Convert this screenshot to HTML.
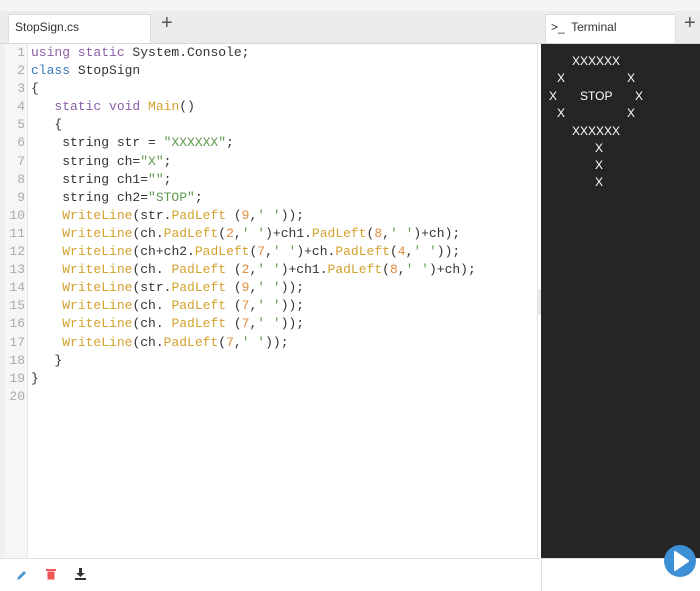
<!DOCTYPE html>
<html><head><style>
body{margin:0;width:700px;height:591px;background:#fff;position:relative;overflow:hidden;font-family:"Liberation Sans",sans-serif}
.a{position:absolute}
.code{font-family:"Liberation Mono",monospace;font-size:13px;line-height:18.1px;white-space:pre;color:#333}
.k{color:#8a5ea8}.b{color:#3a7ab8}.f{color:#d3a22c}.s{color:#5e9a4f}.n{color:#e08a3a}
.term{font-family:"Liberation Sans",sans-serif;font-size:12px;line-height:17.5px;color:#fff;white-space:pre}
</style></head><body>
<div class="a" style="left:0;top:0;width:700px;height:11px;background:#f5f5f5"></div>
<div class="a" style="left:0;top:11px;width:700px;height:32px;background:#ebebeb;border-bottom:1px solid #d8d8d8"></div>
<div class="a" style="left:8px;top:14px;width:143px;height:29px;background:#fff;border:1px solid #ddd;border-bottom:none;box-sizing:border-box"></div>
<div class="a" style="left:15px;top:20px;font-size:12px;color:#333">StopSign.cs</div>
<div class="a" style="left:161px;top:12px;font-size:20px;color:#555;font-weight:300">+</div>
<div class="a" style="left:545px;top:14px;width:131px;height:29px;background:#fff;border:1px solid #ddd;border-bottom:none;box-sizing:border-box"></div>
<div class="a" style="left:551px;top:20px;font-size:12px;color:#333">&gt;_&nbsp; Terminal</div>
<div class="a" style="left:684px;top:12px;font-size:20px;color:#555">+</div>
<div class="a" style="left:0;top:44px;width:5px;height:514px;background:#f0f0f0"></div>
<div class="a" style="left:5px;top:44px;width:22px;height:514px;background:#f6f6f6;border-right:1px solid #e4e4e4"></div>
<div class="a" style="left:537px;top:44px;width:1px;height:514px;background:#e4e4e4"></div>
<div class="a" style="left:538px;top:289px;width:4px;height:26px;background:#e8e8e8;border-radius:2px"></div>
<div class="a" style="left:541px;top:44px;width:159px;height:514px;background:#252525"></div>
<div class="a code" style="left:5px;top:44px;width:20px;text-align:right;color:#aaa">1
2
3
4
5
6
7
8
9
10
11
12
13
14
15
16
17
18
19
20</div>
<div class="a code" style="left:31px;top:44px"><span class="k">using static</span> System.Console;
<span class="b">class</span> StopSign
{
   <span class="k">static void</span> <span class="f">Main</span>()
   {
    string str = <span class="s">"XXXXXX"</span>;
    string ch=<span class="s">"X"</span>;
    string ch1=<span class="s">""</span>;
    string ch2=<span class="s">"STOP"</span>;
    <span class="f">WriteLine</span>(str.<span class="f">PadLeft</span> (<span class="n">9</span>,<span class="s">' '</span>));
    <span class="f">WriteLine</span>(ch.<span class="f">PadLeft</span>(<span class="n">2</span>,<span class="s">' '</span>)+ch1.<span class="f">PadLeft</span>(<span class="n">8</span>,<span class="s">' '</span>)+ch);
    <span class="f">WriteLine</span>(ch+ch2.<span class="f">PadLeft</span>(<span class="n">7</span>,<span class="s">' '</span>)+ch.<span class="f">PadLeft</span>(<span class="n">4</span>,<span class="s">' '</span>));
    <span class="f">WriteLine</span>(ch. <span class="f">PadLeft</span> (<span class="n">2</span>,<span class="s">' '</span>)+ch1.<span class="f">PadLeft</span>(<span class="n">8</span>,<span class="s">' '</span>)+ch);
    <span class="f">WriteLine</span>(str.<span class="f">PadLeft</span> (<span class="n">9</span>,<span class="s">' '</span>));
    <span class="f">WriteLine</span>(ch. <span class="f">PadLeft</span> (<span class="n">7</span>,<span class="s">' '</span>));
    <span class="f">WriteLine</span>(ch. <span class="f">PadLeft</span> (<span class="n">7</span>,<span class="s">' '</span>));
    <span class="f">WriteLine</span>(ch.<span class="f">PadLeft</span>(<span class="n">7</span>,<span class="s">' '</span>));
   }
}
</div>
<div class="a term" style="left:572px;top:53px">XXXXXX</div>
<div class="a term" style="left:557px;top:70px">X</div><div class="a term" style="left:627px;top:70px">X</div>
<div class="a term" style="left:549px;top:88px">X</div><div class="a term" style="left:580px;top:88px">STOP</div><div class="a term" style="left:635px;top:88px">X</div>
<div class="a term" style="left:557px;top:105px">X</div><div class="a term" style="left:627px;top:105px">X</div>
<div class="a term" style="left:572px;top:123px">XXXXXX</div>
<div class="a term" style="left:595px;top:140px">X</div>
<div class="a term" style="left:595px;top:157px">X</div>
<div class="a term" style="left:595px;top:174px">X</div>
<div class="a" style="left:0;top:558px;width:700px;height:1px;background:#e0e0e0"></div>
<div class="a" style="left:541px;top:558px;width:1px;height:33px;background:#e0e0e0"></div>
<svg class="a" style="left:16px;top:569px" width="12" height="12" viewBox="0 0 12 12"><path d="M1 11 L2 8 L8 2 L10 4 L4 10 Z" fill="#4a9ad8"/></svg>
<svg class="a" style="left:46px;top:568px" width="10" height="12" viewBox="0 0 10 12"><rect x="0" y="1" width="10" height="2" fill="#e55"/><rect x="1.5" y="3.5" width="7" height="8" fill="#e55"/></svg>
<svg class="a" style="left:75px;top:568px" width="11" height="12" viewBox="0 0 11 12"><path d="M4 0h3v5h3L5.5 9 1 5h3z" fill="#333"/><rect x="0" y="10" width="11" height="2" fill="#333"/></svg>
<svg class="a" style="left:663px;top:544px" width="34" height="34" viewBox="0 0 34 34"><circle cx="17" cy="17" r="16" fill="#3d8fd6"/><path d="M12 8 L25 17 L12 26 Z" fill="#fff" stroke="#fff" stroke-width="2" stroke-linejoin="round"/></svg>
</body></html>
